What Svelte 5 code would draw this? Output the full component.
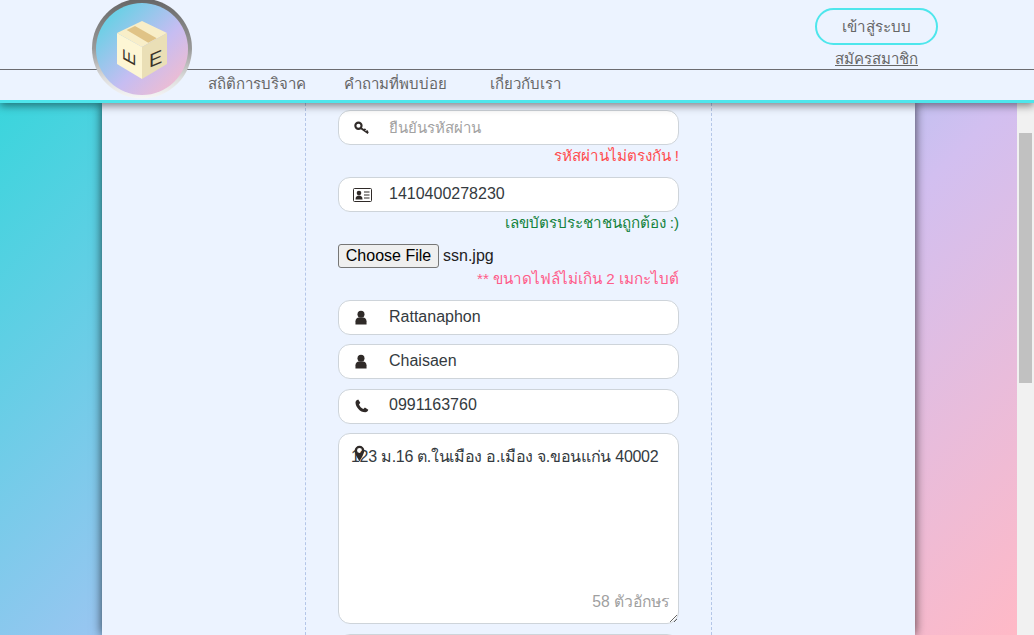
<script>
	let password = '';
	let idCard = '1410400278230';
	let firstName = 'Rattanaphon';
	let lastName = 'Chaisaen';
	let phone = '0991163760';
	let address = '123 ม.16 ต.ในเมือง อ.เมือง จ.ขอนแก่น 40002';

	const navLinks = ['สถิติการบริจาค', 'คำถามที่พบบ่อย', 'เกี่ยวกับเรา'];
</script>

<div class="page">
	<header class="header">
		<div class="top-bar">
			<div class="auth">
				<button class="login">เข้าสู่ระบบ</button>
				<a href="#register" class="register">สมัครสมาชิก</a>
			</div>
		</div>
		<nav class="nav">
			{#each navLinks as link}
				<a href="#nav">{link}</a>
			{/each}
		</nav>

		<svg class="logo" width="104" height="100" viewBox="0 0 104 100">
			<defs>
				<linearGradient id="ring" x1="0" y1="0" x2="0" y2="1">
					<stop offset="0" stop-color="#666" />
					<stop offset="0.5" stop-color="#999" />
					<stop offset="0.8" stop-color="#ddd" />
					<stop offset="1" stop-color="#f6f6f6" />
				</linearGradient>
				<linearGradient id="disc" x1="0.1" y1="0.1" x2="0.9" y2="0.9">
					<stop offset="0" stop-color="#60d2e4" />
					<stop offset="0.6" stop-color="#c6bdf2" />
					<stop offset="1" stop-color="#f0bcd0" />
				</linearGradient>
			</defs>
			<circle cx="52" cy="48.5" r="50" fill="url(#ring)" />
			<circle cx="52" cy="49" r="46" fill="url(#disc)" />
			<path d="M52 21 77 33 52 47 27 33Z" fill="#f8eec8" />
			<path d="M27 33 52 47V79L27 64Z" fill="#fdf6d4" />
			<path d="M77 33 52 47V79L77 64Z" fill="#eadfb6" />
			<path d="M36.700 30 45 26 66.700 38.300 58.300 42.700Z" fill="#e0c386" />
			<text class="box-letter" transform="matrix(0 -1 0.9 0.5 45 67)">E</text>
			<text class="box-letter" transform="matrix(1.050 -0.450 0 1 59 68)">E</text>
		</svg>
	</header>

	<div class="body-row">
		<main class="content">
			<div class="form-col">
				<form class="form" on:submit|preventDefault>
					<div class="field">
						<span class="icon">
							<svg width="16" height="14" viewBox="0 0 18 15"><circle cx="5" cy="5" r="3.500" fill="none" stroke="#2f2a28" stroke-width="2.400" /><path d="M7.500 7.500 16 13.200M11.500 10.200 13 8.600M14 12 15.500 10.400" fill="none" stroke="#2f2a28" stroke-width="2.200" /></svg>
						</span>
						<input class="password" type="password" placeholder="ยืนยันรหัสผ่าน" bind:value={password} />
					</div>
					<p class="msg msg-error">รหัสผ่านไม่ตรงกัน !</p>

					<div class="field">
						<span class="icon">
							<svg width="19" height="14" viewBox="0 0 19 14"><rect x="0.500" y="0.500" width="18" height="13" rx="1" fill="#fff" stroke="#2f2a28" /><circle cx="6" cy="5" r="2.300" fill="#2f2a28" /><path d="M2.500 11.500c0-3 1.500-4 3.500-4s3.500 1 3.500 4Z" fill="#2f2a28" /><path d="M11 4h5.500M11 7h5.500M11 10h5.500" stroke="#2f2a28" stroke-width="1.200" /></svg>
						</span>
						<input type="text" bind:value={idCard} />
					</div>
					<p class="msg msg-ok">เลขบัตรประชาชนถูกต้อง :)</p>

					<div class="file-row">
						<button type="button" class="file-btn">Choose File</button>
						<span>ssn.jpg</span>
					</div>
					<p class="msg msg-hint">** ขนาดไฟล์ไม่เกิน 2 เมกะไบต์</p>

					<div class="field tight">
						<span class="icon user">
							<svg width="12" height="15" viewBox="0 0 13 15"><circle cx="6.500" cy="4" r="3.800" fill="#2f2a28" /><path d="M0.500 15V11.500C0.500 9 2.500 7.500 4 7.500h5c1.500 0 3.500 1.500 3.500 4V15Z" fill="#2f2a28" /></svg>
						</span>
						<input type="text" bind:value={firstName} />
					</div>
					<div class="field tight">
						<span class="icon user">
							<svg width="12" height="15" viewBox="0 0 13 15"><circle cx="6.500" cy="4" r="3.800" fill="#2f2a28" /><path d="M0.500 15V11.500C0.500 9 2.500 7.500 4 7.500h5c1.500 0 3.500 1.500 3.500 4V15Z" fill="#2f2a28" /></svg>
						</span>
						<input type="text" bind:value={lastName} />
					</div>
					<div class="field tight">
						<span class="icon">
							<svg width="14" height="14" viewBox="0 0 14 14"><path d="M3.200 0.500 5.300 3.700 4 5.400c.6 1.700 2.500 3.800 4.400 4.500l1.500-1.300 3.400 2.100c-.3 1.300-1.600 2.600-3 2.600C5 13.300.6 8 .5 3.500.5 2.200 1.800.8 3.200.5Z" fill="#2f2a28" /></svg>
						</span>
						<input type="text" bind:value={phone} />
					</div>

					<div class="area-wrap">
						<svg class="pin" width="11" height="17" viewBox="0 0 12 18"><path d="M6 0.500a5.300 5.300 0 0 0-5.300 5.300C.7 9.500 6 17.500 6 17.500s5.300-8 5.300-11.700A5.300 5.300 0 0 0 6 .5Zm0 2.600a2.700 2.700 0 1 1 0 5.400 2.700 2.700 0 0 1 0-5.400Z" fill="#2f2a28" fill-rule="evenodd" /></svg>
						<textarea wrap="off" bind:value={address}></textarea>
						<span class="count">58 ตัวอักษร</span>
					</div>

					<div class="field"></div>
				</form>
			</div>
		</main>

		<div class="scrollbar"><div class="thumb"></div></div>
	</div>
</div>

<style>
	:global(body) {
		margin: 0;
		overflow: hidden;
	}

	.page {
		width: 1034px;
		height: 635px;
		overflow: hidden;
		display: flex;
		flex-direction: column;
		font-family: 'Liberation Sans', Tahoma, 'Noto Sans', sans-serif;
		font-size: 16px;
		color: #343a40;
	}

	.header {
		position: relative;
		z-index: 2;
		flex: none;
		background: #ecf3ff;
		border-bottom: 3px solid #4ee6ec;
		box-shadow: 0 3px 8px rgba(0, 0, 0, 0.45);
	}

	.top-bar {
		height: 69px;
		display: flex;
		justify-content: flex-end;
		padding-right: 96px;
		border-bottom: 1px solid #6b6b70;
	}

	.auth {
		display: flex;
		flex-direction: column;
		align-items: center;
		padding-top: 8px;
	}

	.login {
		width: 123px;
		height: 38px;
		border: 2px solid #4ee6ec;
		border-radius: 19px;
		background: transparent;
		color: #666;
		font: inherit;
		font-size: 15.200px;
	}

	.register {
		margin-top: 4px;
		color: #666;
		font-size: 15px;
		line-height: 20px;
	}

	.nav {
		height: 30px;
		box-sizing: border-box;
		padding: 0 0 3px 208px;
		display: grid;
		grid-template-columns: 136px 146px auto;
		align-items: center;
		font-size: 15px;
	}

	.nav a {
		color: #666;
		text-decoration: none;
	}

	.logo {
		position: absolute;
		left: 90px;
		top: 0;
	}

	.box-letter {
		font-family: 'Liberation Sans', sans-serif;
		font-size: 19px;
		fill: #3a352c;
	}

	.body-row {
		flex: 1;
		min-height: 0;
		display: flex;
	}

	.content {
		flex: 1;
		padding: 0 102px;
		background: linear-gradient(135deg, #3ad5dc 0%, #a3c4f3 45%, #d2bff0 65%, #ffb9c6 100%);
	}

	.form-col {
		height: 100%;
		background: #ecf3ff;
		box-shadow: 0 0 10px rgba(0, 0, 0, 0.7);
		padding: 0 203px;
	}

	.form {
		height: 100%;
		box-sizing: border-box;
		padding: 7px 32px 0 32px;
		border-left: 1px dashed #b4c6e8;
		border-right: 1px dashed #b4c6e8;
	}

	.field {
		height: 35px;
		box-sizing: border-box;
		display: flex;
		align-items: center;
		background: #fff;
		border: 1px solid #ced4da;
		border-radius: 12px;
	}

	.field.tight {
		margin-bottom: 9.400px;
	}

	.icon {
		flex: none;
		width: 46px;
		margin-right: 4px;
		display: flex;
		justify-content: center;
	}

	.icon.user {
		width: 44px;
		margin-right: 6px;
	}

	.field input {
		flex: 1;
		min-width: 0;
		border: 0;
		outline: 0;
		padding: 0 0 2px;
		background: transparent;
		color: #343a40;
		font: inherit;
	}

	.field input.password {
		padding-bottom: 0;
	}

	.field input.password::placeholder {
		color: #a2a2a2;
		opacity: 1;
		font-size: 15px;
	}

	.msg {
		margin: 0;
		height: 32px;
		padding-top: 1px;
		box-sizing: border-box;
		text-align: right;
		font-size: 15.200px;
		line-height: 20px;
	}

	.msg-error {
		color: #ff4d4f;
	}

	.msg-ok {
		color: #14823c;
	}

	.msg-hint {
		color: #ff5c8a;
	}

	.file-row {
		height: 24px;
		display: flex;
		align-items: center;
		gap: 4px;
		color: #222;
	}

	.file-btn {
		height: 24px;
		width: 101px;
		padding: 0;
		border: 1px solid #767676;
		border-radius: 3px;
		background: #efefef;
		color: #000;
		font: inherit;
	}

	.area-wrap {
		position: relative;
		height: 191px;
		margin-bottom: 10px;
	}

	.area-wrap textarea {
		display: block;
		width: 100%;
		height: 100%;
		box-sizing: border-box;
		padding: 10px 12px;
		background: #fff;
		border: 1px solid #ced4da;
		border-radius: 12px;
		outline: 0;
		overflow: hidden;
		color: #343a40;
		font: inherit;
		letter-spacing: -0.3px;
	}

	.pin {
		position: absolute;
		left: 16px;
		top: 12px;
		z-index: 1;
	}

	.count {
		position: absolute;
		right: 10px;
		bottom: 10px;
		color: #a0a0a0;
		font-size: 15.700px;
	}

	.scrollbar {
		flex: none;
		width: 17px;
		background: #f1f1f1;
		padding-top: 30px;
		box-sizing: border-box;
	}

	.thumb {
		width: 13px;
		height: 250px;
		margin-left: 2px;
		background: #c1c1c1;
	}
</style>
